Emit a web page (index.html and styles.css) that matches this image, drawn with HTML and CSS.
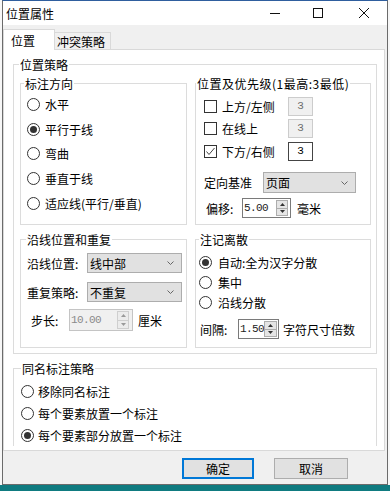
FILE: index.html
```html
<!DOCTYPE html>
<html>
<head>
    <title>位置属性</title>
    <link rel="stylesheet" href="styles.css">
</head>
<body>
    <div class="window">
        <div class="titlebar">
            <span class="title">位置属性</span>
            <div class="caption">
                <span class="cap-btn cap-min"><svg width="10" height="10"><line x1="0" y1="5.5" x2="10" y2="5.5" /></svg></span>
                <span class="cap-btn"><svg width="10" height="10"><rect x="0.5" y="0.5" width="9" height="9" /></svg></span>
                <span class="cap-btn"><svg width="10" height="10"><line x1="0" y1="0" x2="10" y2="10" /><line x1="10" y1="0" x2="0" y2="10" /></svg></span>
            </div>
        </div>

        <div class="tabs">
            <div class="tab tab-active">位置</div>
            <div class="tab tab-other">冲突策略</div>
        </div>

        <div class="panel">
            <div class="panel-body">
                <fieldset class="group group-main">
                    <legend>位置策略</legend>
                    <div class="main-grid">
                        <fieldset class="group group-dir">
                            <legend>标注方向</legend>
                            <div class="dir-list">
                                <label class="radio-row"><span class="radio"></span>水平</label>
                                <label class="radio-row"><span class="radio checked"></span>平行于线</label>
                                <label class="radio-row"><span class="radio"></span>弯曲</label>
                                <label class="radio-row"><span class="radio"></span>垂直于线</label>
                                <label class="radio-row"><span class="radio"></span>适应线(平行/垂直)</label>
                            </div>
                        </fieldset>

                        <fieldset class="group group-prio">
                            <legend>位置及优先级(1最高:3最低)</legend>
                            <div class="prio">
                                <div class="prio-row">
                                    <span class="check"></span>
                                    <span class="check-label">上方/左侧</span>
                                    <span class="num-box">3</span>
                                </div>
                                <div class="prio-row">
                                    <span class="check"></span>
                                    <span class="check-label">在线上</span>
                                    <span class="num-box">3</span>
                                </div>
                                <div class="prio-row">
                                    <span class="check"><svg width="11" height="11"><polyline points="1.5,5.5 4,8.5 9.5,2" /></svg></span>
                                    <span class="check-label">下方/右侧</span>
                                    <span class="num-box on">3</span>
                                </div>
                                <div class="orient-row">
                                    <span class="orient-label">定向基准</span>
                                    <span class="select select-orient">页面<svg width="7" height="4"><polyline points="0.5,0.5 3.5,3.5 6.5,0.5" /></svg></span>
                                </div>
                                <div class="offset-row">
                                    <span class="offset-label">偏移:</span>
                                    <span class="spin spin-offset">
                                        <span class="spin-value">5.00</span>
                                        <span class="spin-btns">
                                            <span class="spin-btn"><svg width="5" height="3"><polygon points="0,3 2.5,0 5,3" /></svg></span>
                                            <span class="spin-btn"><svg width="5" height="3"><polygon points="0,0 5,0 2.5,3" /></svg></span>
                                        </span>
                                    </span>
                                    <span class="offset-unit">毫米</span>
                                </div>
                            </div>
                        </fieldset>

                        <fieldset class="group group-along">
                            <legend>沿线位置和重复</legend>
                            <div class="along">
                                <div class="along-row">
                                    <span class="along-label">沿线位置:</span>
                                    <span class="select select-along">线中部<svg width="7" height="4"><polyline points="0.5,0.5 3.5,3.5 6.5,0.5" /></svg></span>
                                </div>
                                <div class="along-row along-repeat">
                                    <span class="along-label">重复策略:</span>
                                    <span class="select select-along">不重复<svg width="7" height="4"><polyline points="0.5,0.5 3.5,3.5 6.5,0.5" /></svg></span>
                                </div>
                                <div class="step-row">
                                    <span class="step-label">步长:</span>
                                    <span class="spin spin-step disabled">
                                        <span class="spin-value">10.00</span>
                                        <span class="spin-btns">
                                            <span class="spin-btn"><svg width="5" height="3"><polygon points="0,3 2.5,0 5,3" /></svg></span>
                                            <span class="spin-btn"><svg width="5" height="3"><polygon points="0,0 5,0 2.5,3" /></svg></span>
                                        </span>
                                    </span>
                                    <span class="step-unit">厘米</span>
                                </div>
                            </div>
                        </fieldset>

                        <fieldset class="group group-spread">
                            <legend>注记离散</legend>
                            <div class="spread">
                                <label class="spread-row"><span class="radio checked"></span>自动:全为汉字分散</label>
                                <label class="spread-row"><span class="radio"></span>集中</label>
                                <label class="spread-row"><span class="radio"></span>沿线分散</label>
                                <div class="gap-row">
                                    <span class="gap-label">间隔:</span>
                                    <span class="spin spin-gap">
                                        <span class="spin-value">1.50</span>
                                        <span class="spin-btns">
                                            <span class="spin-btn"><svg width="5" height="3"><polygon points="0,3 2.5,0 5,3" /></svg></span>
                                            <span class="spin-btn"><svg width="5" height="3"><polygon points="0,0 5,0 2.5,3" /></svg></span>
                                        </span>
                                    </span>
                                    <span class="gap-unit">字符尺寸倍数</span>
                                </div>
                            </div>
                        </fieldset>
                    </div>
                </fieldset>

                <fieldset class="group group-same">
                    <legend>同名标注策略</legend>
                    <div class="same">
                        <label class="same-row"><span class="radio"></span>移除同名标注</label>
                        <label class="same-row"><span class="radio"></span>每个要素放置一个标注</label>
                        <label class="same-row"><span class="radio checked"></span>每个要素部分放置一个标注</label>
                    </div>
                </fieldset>
            </div>
        </div>

        <div class="footer">
            <span class="btn btn-default">确定</span>
            <span class="btn btn-cancel">取消</span>
        </div>
    </div>
    <div class="desktop-strip"></div>
</body>
</html>
```

FILE: styles.css
```css
* {
    box-sizing: border-box;
}

body {
    margin: 0;
    width: 390px;
    height: 491px;
    overflow: hidden;
    background-color: #f7f7f7;
    color: #000;
    font-family: "Noto Sans CJK SC", "Noto Sans", sans-serif;
    font-size: 12px;
    line-height: 15px;
}

.window {
    margin-left: 2px;
    width: 386px;
    height: 485px;
    border: 1px solid #6b6b6b;
    border-top-color: #2f5e9e;
    background-color: #f0f0f0;
    display: flex;
    flex-direction: column;
}

.desktop-strip {
    height: 6px;
    background-color: #0f7b80;
}

/* title bar */
.titlebar {
    height: 24px;
    flex: none;
    background-color: #fff;
    display: flex;
    align-items: center;
    padding-left: 3px;
}

.title {
    flex: 1;
}

.caption {
    display: flex;
    height: 100%;
}

.cap-btn {
    width: 46px;
    display: flex;
    align-items: center;
    justify-content: center;
}

.cap-btn svg {
    stroke: #111;
    stroke-width: 1;
    fill: none;
}

.cap-min svg {
    margin-left: 5px;
}

/* tabs */
.tabs {
    height: 24px;
    flex: none;
    display: flex;
    align-items: flex-end;
    padding-top: 4px;
}

.tab {
    border: 1px solid #d9d9d9;
    border-bottom: none;
}

.tab-active {
    position: relative;
    z-index: 1;
    width: 52px;
    height: 21px;
    margin-bottom: -1px;
    padding: 3px 0 0 7px;
    background-color: #fff;
}

.tab-other {
    width: 57px;
    height: 17px;
    margin-left: -1px;
    padding: 2px 0 0 2px;
    line-height: 14px;
    background-color: #f0f0f0;
}

.panel {
    height: 402px;
    flex: none;
    margin-right: 2px;
    border: 1px solid #d9d9d9;
    background-color: #fff;
}

.panel-body {
    height: 396px;
    overflow: hidden;
    padding-top: 7px;
}

/* group boxes */
.group {
    margin: 0;
    padding: 0;
    min-width: 0;
    border: 1px solid #dcdcdc;
}

.group > legend {
    padding: 0 1px;
    line-height: 15px;
}

.group-main {
    margin: 0 7px 0 9px;
}

.group-main > legend {
    margin-left: 5px;
}

.main-grid {
    display: grid;
    grid-template-columns: 167px 176px;
    grid-template-rows: 149px 116px;
    column-gap: 8px;
    row-gap: 7px;
    padding: 4px 5px 5px 6px;
}

.group-dir > legend {
    margin-left: 3px;
}

.group-prio > legend {
    margin-left: 0;
    letter-spacing: 0.5px;
}

.group-along > legend {
    margin-left: 5px;
}

.group-spread > legend {
    margin-left: 3px;
}

.group-same {
    height: 100px;
    margin: 7px 7px 0 9px;
}

.group-same > legend {
    margin-left: 7px;
}

/* radios and checks */
.radio {
    width: 13px;
    height: 13px;
    flex: none;
    border: 1px solid #333;
    border-radius: 50%;
    background-color: #fff;
    display: flex;
    align-items: center;
    justify-content: center;
}

.radio.checked::after {
    content: "";
    width: 7px;
    height: 7px;
    border-radius: 50%;
    background-color: #333;
}

.check {
    width: 13px;
    height: 13px;
    flex: none;
    border: 1px solid #333;
    background-color: #fff;
    display: flex;
    align-items: center;
    justify-content: center;
}

.check svg {
    stroke: #444;
    stroke-width: 1;
    fill: none;
}

/* direction */
.dir-list {
    padding: 1px 0 0 6px;
}

.radio-row {
    height: 24.75px;
    display: flex;
    align-items: center;
}

.radio-row .radio {
    margin-right: 5px;
}

/* priority */
.prio {
    display: flex;
    flex-direction: column;
    padding: 6px 0 0 8px;
}

.prio-row {
    height: 19px;
    display: flex;
    align-items: center;
}

.prio-row + .prio-row {
    margin-top: 3px;
}

.prio-row:nth-child(3) {
    margin-top: 4px;
}

.check-label {
    width: 66px;
    margin-left: 5px;
}

.num-box {
    width: 25px;
    height: 19px;
    border: 1px solid #cccccc;
    background-color: #f0f0f0;
    color: #6d6d6d;
    text-align: center;
    font-family: "Liberation Mono", monospace;
    font-size: 11px;
    line-height: 17px;
}

.num-box.on {
    border-color: #444;
    background-color: #fff;
    color: #000;
}

.orient-row {
    display: flex;
    align-items: center;
    margin-top: 11px;
}

.orient-label {
    width: 59px;
}

.select {
    display: flex;
    align-items: center;
    justify-content: space-between;
    border: 1px solid #adadad;
    background-color: #e1e1e1;
    padding: 0 7px 0 2px;
}

.select svg {
    stroke: #666;
    stroke-width: 1;
    fill: none;
}

.select-orient {
    width: 93px;
    height: 21px;
}

.offset-row {
    display: flex;
    align-items: center;
    margin-top: 5px;
    padding-left: 2px;
}

.offset-label {
    width: 36px;
}

.offset-unit {
    margin-left: 6px;
}

/* spin boxes */
.spin {
    display: flex;
    border: 1px solid #7a7a7a;
    background-color: #fff;
}

.spin-value {
    flex: 1;
    min-width: 0;
    overflow: hidden;
    white-space: nowrap;
    padding-left: 1px;
    font-family: "Liberation Mono", monospace;
    font-size: 11px;
    letter-spacing: -0.6px;
    color: #222;
    display: flex;
    align-items: center;
}

.spin-btns {
    width: 12px;
    flex: none;
    margin: 1px 2px 1px 0;
    display: flex;
    flex-direction: column;
    border: 1px solid #adadad;
}

.spin-btn {
    flex: 1;
    display: flex;
    align-items: center;
    justify-content: center;
    background-color: #e5e5e5;
}

.spin-btn + .spin-btn {
    border-top: 1px solid #adadad;
}

.spin-btn svg {
    fill: #333;
}

.spin.disabled {
    border-color: #c4c4c4;
    background-color: #f0f0f0;
}

.spin.disabled .spin-value {
    color: #8a8a8a;
}

.spin.disabled .spin-btns {
    border-color: #cfcfcf;
}

.spin.disabled .spin-btn {
    background-color: #ececec;
}

.spin.disabled .spin-btn + .spin-btn {
    border-top-color: #cfcfcf;
}

.spin.disabled .spin-btn svg {
    fill: #9a9a9a;
}

.spin-offset {
    width: 49px;
    height: 20px;
}

.spin-step {
    width: 64px;
    height: 22px;
}

.spin-step .spin-btns {
    margin-right: 3px;
}

.spin-gap {
    width: 41px;
    height: 20px;
}

.spin-gap .spin-btns {
    width: 13px;
    margin-right: 1px;
}

/* along line */
.along {
    padding: 6px 0 0 6px;
}

.along-row {
    height: 20px;
    display: flex;
    align-items: center;
}

.along-repeat {
    margin-top: 9px;
}

.along-label {
    width: 60px;
}

.select-along {
    width: 95px;
    height: 20px;
}

.step-row {
    display: flex;
    align-items: center;
    margin-top: 7px;
    padding-left: 4px;
}

.step-label {
    width: 38px;
}

.step-unit {
    margin-left: 5px;
}

/* spread */
.spread {
    padding: 5px 0 0 3px;
}

.spread-row {
    height: 20px;
    display: flex;
    align-items: center;
}

.spread-row .radio {
    margin-right: 6px;
}

.gap-row {
    display: flex;
    align-items: center;
    margin-top: 7px;
    padding-left: 1px;
}

.gap-label {
    width: 38px;
}

.gap-unit {
    margin-left: 4px;
}

/* same name */
.same {
    padding: 4px 0 0 7px;
}

.same-row {
    height: 22px;
    display: flex;
    align-items: center;
}

.same-row .radio {
    margin-right: 4px;
}

/* footer */
.footer {
    flex: 1;
    display: flex;
    justify-content: flex-end;
    gap: 20px;
    padding: 7px 39px 0 0;
}

.btn {
    height: 21px;
    border: 1px solid #adadad;
    background-color: #e1e1e1;
    display: flex;
    align-items: center;
    justify-content: center;
}

.btn-default {
    width: 72px;
    border: 2px solid #0078d7;
}

.btn-cancel {
    width: 74px;
}
```
